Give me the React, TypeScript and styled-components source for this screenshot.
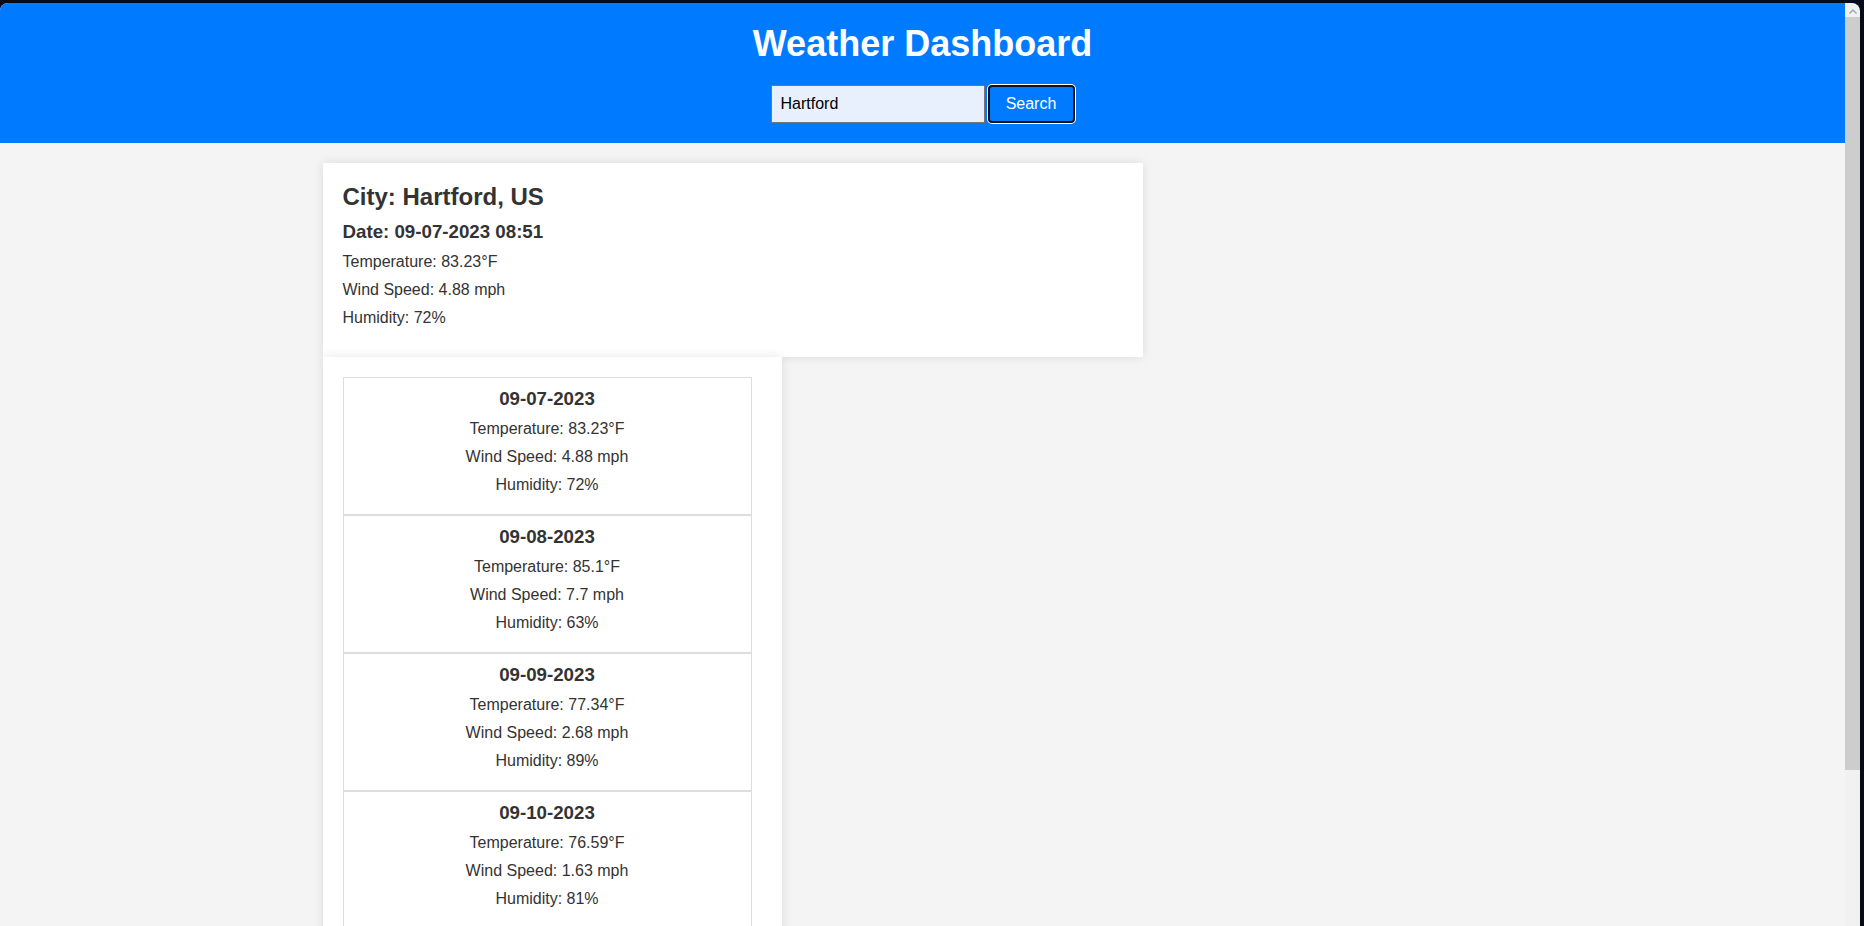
import React from "react";
import styled, { createGlobalStyle } from "styled-components";

const GlobalStyle = createGlobalStyle`
  html, body {
    margin: 0;
    padding: 0;
    overflow: hidden;
  }
  body {
    font-family: "Liberation Sans", Arial, sans-serif;
    color: #333;
  }
  * { box-sizing: border-box; }
`;

const Frame = styled.div`
  display: flex;
  width: 100vw;
  height: 100vh;
  padding: 3px 4px 0 0;
  background: #070b17;
  overflow: hidden;
`;

const Viewport = styled.div`
  flex: 1;
  min-width: 0;
  display: flex;
  flex-direction: column;
  background: #f4f4f4;
  border-top-left-radius: 8px;
  overflow: hidden;
`;

const Scrollbar = styled.div`
  flex: none;
  width: 15px;
  display: flex;
  flex-direction: column;
  background: #f1f1f1;
  border-top-right-radius: 8px;
`;

const ScrollArrow = styled.div`
  height: 14px;
  display: flex;
  align-items: center;
  justify-content: center;
  padding-top: 2px;
`;

const ScrollThumb = styled.div`
  height: 753px;
  background: #cdcdcd;
`;

const Header = styled.header`
  flex: none;
  background: #007bff;
  color: #fff;
  padding: 20px;
  text-align: center;
`;

const Title = styled.h1`
  margin: 0 0 20px;
  font-size: 36px;
  font-weight: bold;
  line-height: normal;
`;

const SearchForm = styled.form`
  display: flex;
  justify-content: center;
  gap: 3px;
`;

const SearchInput = styled.input`
  width: 214px;
  height: 38px;
  padding: 0 9px;
  border: 1px solid #767676;
  background: #e8f0fe;
  color: #000;
  font-family: "Liberation Sans", Arial, sans-serif;
  font-size: 16px;
  outline: none;
`;

const SearchButton = styled.button`
  width: 87px;
  height: 38px;
  padding: 0;
  border: 2px solid #111;
  border-radius: 4px;
  box-shadow: 0 0 0 1px #fff;
  background: #007bff;
  color: #fff;
  font-family: "Liberation Sans", Arial, sans-serif;
  font-size: 16px;
`;

const Container = styled.main`
  width: 1200px;
  margin: 20px auto 0;
  display: flex;
  flex-direction: column;
  align-items: flex-start;
`;

const CurrentCard = styled.section`
  width: 820px;
  padding: 20px;
  background: #fff;
  box-shadow: 0 0 10px rgba(0, 0, 0, 0.1);
`;

const CityName = styled.h2`
  margin: 0 0 10px;
  font-size: 24px;
  line-height: normal;
`;

const DateLine = styled.h3<{ $spaced?: boolean }>`
  margin: 0 0 ${(p) => (p.$spaced ? "10px" : "0")};
  font-size: 18.72px;
  line-height: normal;
`;

const Stat = styled.p`
  margin: 10px 0;
  font-size: 16px;
  line-height: normal;
`;

const ForecastPanel = styled.section`
  width: 459px;
  padding: 20px;
  background: #fff;
  box-shadow: 0 0 10px rgba(0, 0, 0, 0.1);
`;

const ForecastItem = styled.div`
  width: 409px;
  padding: 10px;
  border: 1px solid #ddd;
  text-align: center;
`;

const forecast = [
  { date: "09-07-2023", temp: "83.23", wind: "4.88", humidity: "72" },
  { date: "09-08-2023", temp: "85.1", wind: "7.7", humidity: "63" },
  { date: "09-09-2023", temp: "77.34", wind: "2.68", humidity: "89" },
  { date: "09-10-2023", temp: "76.59", wind: "1.63", humidity: "81" },
];

export default function App() {
  return (
    <>
      <GlobalStyle />
      <Frame>
        <Viewport>
          <Header>
            <Title>Weather Dashboard</Title>
            <SearchForm onSubmit={(e) => e.preventDefault()}>
              <SearchInput type="text" defaultValue="Hartford" />
              <SearchButton type="submit">Search</SearchButton>
            </SearchForm>
          </Header>
          <Container>
            <CurrentCard>
              <CityName>City: Hartford, US</CityName>
              <DateLine $spaced>Date: 09-07-2023 08:51</DateLine>
              <Stat>Temperature: 83.23°F</Stat>
              <Stat>Wind Speed: 4.88 mph</Stat>
              <Stat>Humidity: 72%</Stat>
            </CurrentCard>
            <ForecastPanel>
              {forecast.map((d) => (
                <ForecastItem key={d.date}>
                  <DateLine>{d.date}</DateLine>
                  <Stat>Temperature: {d.temp}°F</Stat>
                  <Stat>Wind Speed: {d.wind} mph</Stat>
                  <Stat>Humidity: {d.humidity}%</Stat>
                </ForecastItem>
              ))}
            </ForecastPanel>
          </Container>
        </Viewport>
        <Scrollbar>
          <ScrollArrow>
            <svg width="8" height="5" viewBox="0 0 8 5">
              <path d="M0.5 4.5 L4 1 L7.5 4.5" fill="none" stroke="#a3a3a3" strokeWidth="1.4" />
            </svg>
          </ScrollArrow>
          <ScrollThumb />
        </Scrollbar>
      </Frame>
    </>
  );
}
